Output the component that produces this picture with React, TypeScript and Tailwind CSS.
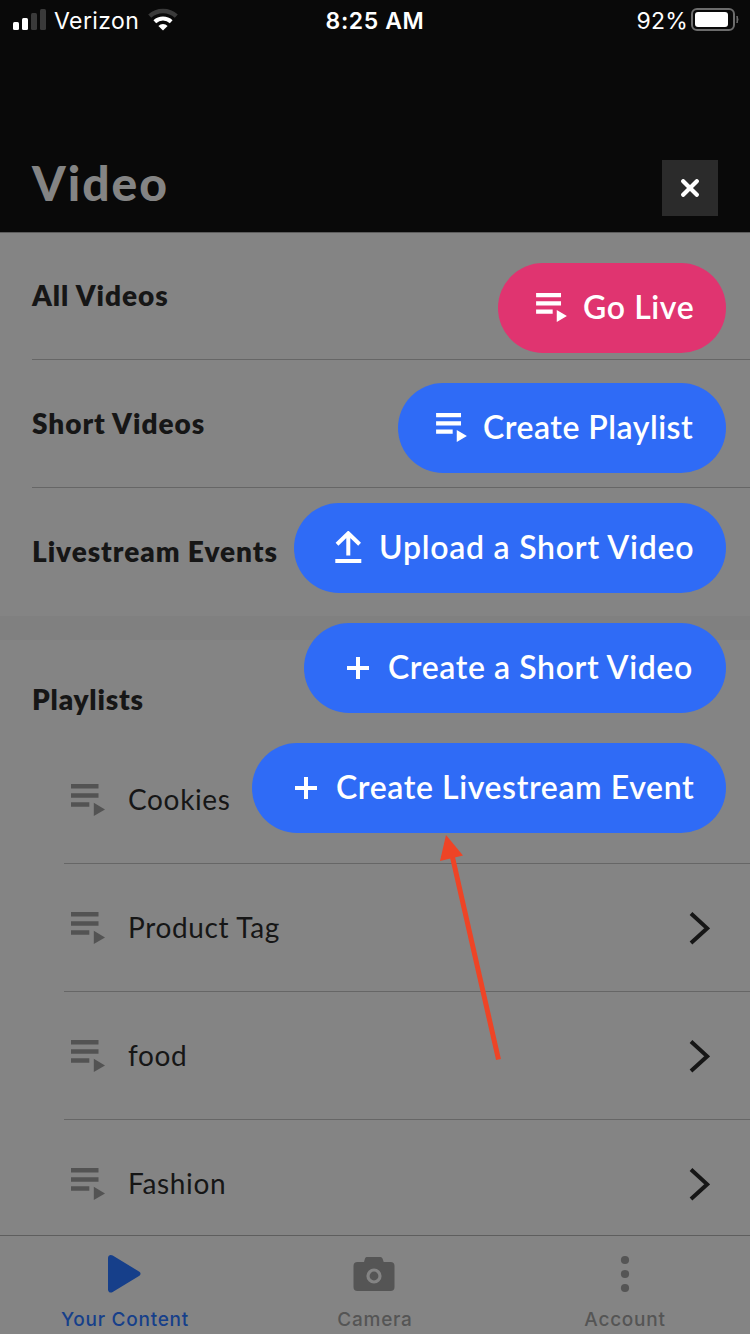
import React from "react";
import clsx from "clsx";

const SECTIONS = ["All Videos", "Short Videos", "Livestream Events"];
const PLAYLISTS = ["Cookies", "Product Tag", "food", "Fashion"];

type ActionIcon = "playlist" | "upload" | "plus";

const ACTIONS: { label: string; icon: ActionIcon; className: string; text: string }[] = [
  { label: "Go Live", icon: "playlist", className: "w-[228px] bg-[#e03470]", text: "ml-4 tracking-[0.6px]" },
  { label: "Create Playlist", icon: "playlist", className: "w-[328px] bg-[#2f6bf6]", text: "ml-4 tracking-[0.5px]" },
  { label: "Upload a Short Video", icon: "upload", className: "w-[432px] bg-[#2f6bf6]", text: "ml-[17px] tracking-[0.75px]" },
  { label: "Create a Short Video", icon: "plus", className: "w-[422px] bg-[#2f6bf6]", text: "ml-[18px] tracking-[0.6px]" },
  { label: "Create Livestream Event", icon: "plus", className: "w-[474px] bg-[#2f6bf6]", text: "ml-[18px] tracking-[0.6px]" },
];

function PlaylistIcon({ className }: { className?: string }) {
  return (
    <svg viewBox="0 0 34 32" fill="currentColor" className={clsx("shrink-0", className)}>
      <path d="M0 0h27.5v4.6H0zM0 9.2h27.5v4.6H0zM0 18.2h18.3v4.6H0zM22.8 18.8 34 25.4 22.8 32z" />
    </svg>
  );
}

function UploadIcon() {
  return (
    <svg viewBox="0 0 27 32" className="-mt-0.5 h-8 w-[27px] shrink-0" fill="none" stroke="currentColor" strokeWidth="4">
      <path d="M13.3 24.4V3M2 13.2 13.3 2.3l11.3 10.9M.3 29.9h26" />
    </svg>
  );
}

function PlusIcon() {
  return (
    <svg viewBox="0 0 24 24" className="h-6 w-6 shrink-0" fill="none" stroke="currentColor" strokeWidth="4">
      <path d="M12 1v22M1 12h22" />
    </svg>
  );
}

function StatusBar() {
  return (
    <div className="grid h-10 grid-cols-3 font-['Inter'] text-[23px] leading-10 text-white">
      <div className="flex items-center pl-[13px]">
        <svg width="34" height="22" viewBox="0 0 34 22" className="-mt-0.5">
          <rect x="0" y="13" width="6" height="8" rx="1.5" fill="#fff" />
          <rect x="9" y="9" width="6" height="12" rx="1.5" fill="#fff" />
          <rect x="18" y="4" width="6" height="17" rx="1.5" fill="#3a3a3a" />
          <rect x="27" y="0" width="6" height="21" rx="1.5" fill="#3a3a3a" />
        </svg>
        <span className="ml-[7px] pt-px tracking-[0.4px]">Verizon</span>
        <svg width="30" height="23" viewBox="0 0 30 23" className="-mt-0.5 ml-[9px]">
          <path d="M1.7 8.2a19.5 19.5 0 0 1 26.6 0" fill="none" stroke="#3a3a3a" strokeWidth="4.4" />
          <path d="M6.8 13.7a12 12 0 0 1 16.4 0" fill="none" stroke="#fff" strokeWidth="4" />
          <path d="M15 22.5 10.4 18a6.5 6.5 0 0 1 9.2 0z" fill="#fff" />
        </svg>
      </div>
      <div className="pt-px text-center font-semibold tracking-[0.6px]">8:25 AM</div>
      <div className="flex items-center justify-end pr-[10px]">
        <span className="pt-px tracking-[0.2px]">92%</span>
        <svg width="49" height="24" viewBox="0 0 49 24" className="-mt-px ml-[3px]">
          <rect x="1" y="1" width="42" height="21" rx="5" fill="none" stroke="#6c6c6c" strokeWidth="2" />
          <rect x="4" y="4" width="33" height="15" rx="3" fill="#fff" />
          <path d="M46 8q2 3.5 0 7z" fill="#6c6c6c" stroke="#6c6c6c" />
        </svg>
      </div>
    </div>
  );
}

function TabBar() {
  return (
    <nav className="grid h-[99px] shrink-0 grid-cols-3 border-t border-[#5e5e5e] bg-[#848484] font-['Inter'] text-[19px] font-medium tracking-[0.75px] text-[#555]">
      <div className="flex flex-col items-center text-[#163f8a]">
        <svg width="34" height="40" viewBox="0 0 34 40" className="mt-[18px] -ml-0.5" fill="currentColor">
          <path d="M1 4.2C1 1.5 3.500.3 5.700 1.600L32 17.600c2 1.200 2 3.200 0 4.400L5.700 38C3.500 39.300 1 38.100 1 35.400z" />
        </svg>
        <span className="mt-[14px] leading-6">Your Content</span>
      </div>
      <div className="flex flex-col items-center">
        <svg width="42" height="40" viewBox="0 0 42 40" className="mt-[18px] -ml-0.5">
          <path d="M13.5 3h14q1.5 0 2 1.5L30.7 8H37.5q4 0 4 4v21q0 4-4 4h-33q-4 0-4-4V12q0-4 4-4h6.5l1-3.5Q12.5 3 13.5 3z" fill="#555" />
          <circle cx="21" cy="22" r="6" fill="none" stroke="#848484" strokeWidth="3.2" />
        </svg>
        <span className="mt-[14px] leading-6">Camera</span>
      </div>
      <div className="flex flex-col items-center">
        <svg width="10" height="40" viewBox="0 0 10 40" className="mt-[18px]" fill="currentColor">
          <circle cx="5" cy="6" r="4.1" />
          <circle cx="5" cy="20" r="4.1" />
          <circle cx="5" cy="34" r="4.1" />
        </svg>
        <span className="mt-[14px] leading-6">Account</span>
      </div>
    </nav>
  );
}

export default function App() {
  return (
    <div className="relative flex h-[1334px] w-[750px] flex-col overflow-hidden bg-[#848484] font-['Lato',sans-serif] text-[#161616]">
      <header className="h-[233px] shrink-0 border-b border-[#5c5c5c] bg-[#090909]">
        <StatusBar />
        <div className="mt-[120px] flex items-start justify-between pr-8 pl-8">
          <h1 className="-mt-px text-[48px] leading-[48px] font-black tracking-[2px] text-[#848484]">Video</h1>
          <button className="flex h-14 w-14 items-center justify-center bg-[#2b2b2b] text-white">
            <svg width="18" height="18" viewBox="0 0 18 18" fill="none" stroke="currentColor" strokeWidth="4.2" strokeLinecap="round">
              <path d="m2.2 2.2 13.6 13.6M15.8 2.2 2.2 15.8" />
            </svg>
          </button>
        </div>
      </header>

      <main className="-mt-px min-h-0 flex-1 overflow-hidden">
        {SECTIONS.map((section, i) => (
          <div
            key={section}
            className={clsx(
              "ml-8 flex h-32 items-center pb-0.5 text-[28px] font-extrabold tracking-[0.95px]",
              i < SECTIONS.length - 1 && "border-b border-[#666]"
            )}
          >
            {section}
          </div>
        ))}
        <div className="h-6 bg-[#808080]" />
        <h2 className="flex h-24 items-center pt-[22px] pl-8 text-[28px] font-extrabold tracking-[0.8px]">Playlists</h2>
        {PLAYLISTS.map((name) => (
          <div key={name} className="ml-16 flex h-32 items-center border-b border-[#666] pr-10 pl-[7px]">
            <PlaylistIcon className="h-8 w-[34px] text-[#535353]" />
            <span className="ml-[23px] flex-1 pb-0.5 text-[28px] tracking-[0.65px]">{name}</span>
            <svg width="21" height="34" viewBox="0 0 21 34" fill="none" stroke="currentColor" strokeWidth="4">
              <path d="M2 2.5 18.2 17.3 2 32" />
            </svg>
          </div>
        ))}
      </main>

      <TabBar />

      {/* floating action menu */}
      <div className="absolute top-[263px] right-6 flex flex-col items-end gap-[30px]">
        {ACTIONS.map((action) => (
          <button
            key={action.label}
            className={clsx(
              "flex h-[90px] items-center rounded-full text-[32px] font-semibold whitespace-nowrap text-white",
              action.icon === "playlist" ? "pl-[38px]" : action.icon === "upload" ? "pl-[41px]" : "pl-[42px]",
              action.className
            )}
          >
            {action.icon === "playlist" && <PlaylistIcon className="-mt-px h-[29px] w-[31px]" />}
            {action.icon === "upload" && <UploadIcon />}
            {action.icon === "plus" && <PlusIcon />}
            <span className={clsx("pb-0.5", action.text)}>{action.label}</span>
          </button>
        ))}
      </div>

      <svg className="absolute top-[835px] left-[439px]" width="64" height="228" viewBox="0 0 64 228">
        <path d="m13 20 46.5 204.5" stroke="#ee4426" strokeWidth="5" />
        <path d="M7 0 24 20.5 1 26z" fill="#ee4426" />
      </svg>
    </div>
  );
}
